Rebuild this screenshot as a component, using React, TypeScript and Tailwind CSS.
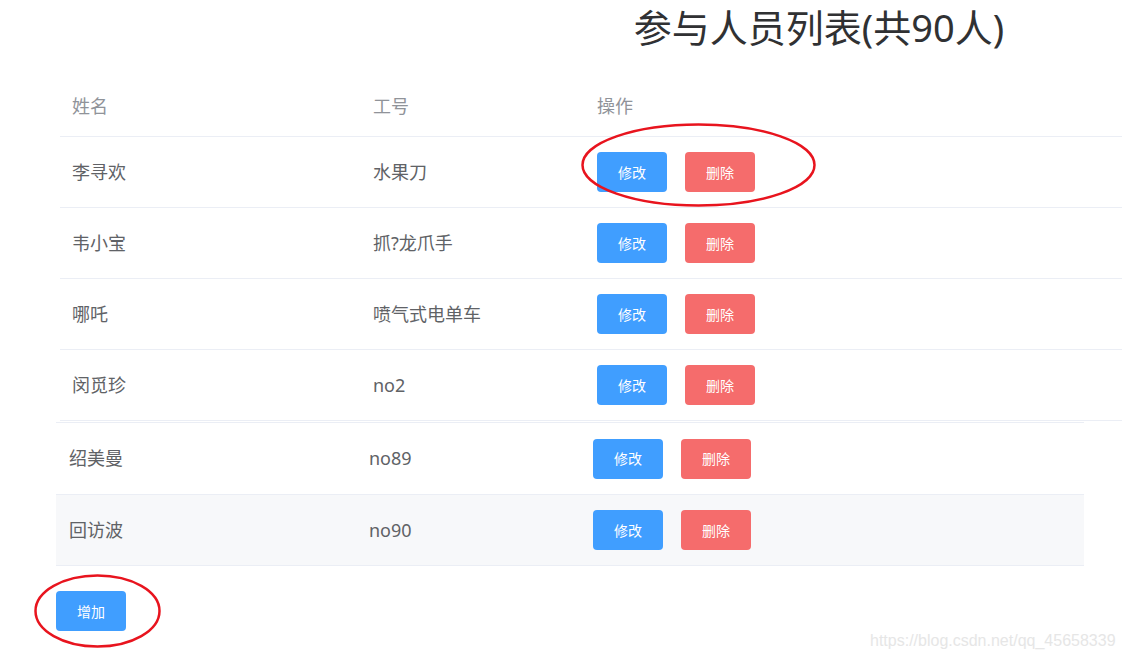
import React from "react";

const rowsTop = [
  ["李寻欢", "水果刀"],
  ["韦小宝", "抓?龙爪手"],
  ["哪吒", "喷气式电单车"],
  ["闵觅珍", "no2"],
];

const font = { fontFamily: '"Noto Sans", "Noto Sans CJK SC", sans-serif' };

function Buttons() {
  return (
    <div className="flex gap-[18px]">
      <button className="w-[70px] h-[40px] rounded-[4px] bg-[#409eff] text-white text-[14px]">修改</button>
      <button className="w-[70px] h-[40px] rounded-[4px] bg-[#f56c6c] text-white text-[14px]">删除</button>
    </div>
  );
}

export default function App() {
  return (
    <div className="relative w-[1122px] h-[660px] overflow-hidden bg-white text-[#606266]" style={font}>
      <div className="h-[76px] ml-[619px] w-[400px] text-center text-[38px] leading-[54px] text-[#303133] whitespace-nowrap">
        参与人员列表(共90人)
      </div>
      <div className="ml-[60px] w-[1062px]">
        <div className="grid grid-cols-[301px_224px_1fr] h-[61px] items-center border-b border-[#ebeef5] text-[18px] text-[#909399]">
          <div className="pl-[12px]">姓名</div>
          <div className="pl-[12px]">工号</div>
          <div className="pl-[12px]">操作</div>
        </div>
        {rowsTop.map((r, i) => (
          <div key={i} className="grid grid-cols-[301px_224px_1fr] h-[71px] items-center border-b border-[#ebeef5] text-[18px]">
            <div className="pl-[12px]">{r[0]}</div>
            <div className="pl-[12px]">{r[1]}</div>
            <div className="pl-[12px]"><Buttons /></div>
          </div>
        ))}
      </div>
      <div className="mt-[1px] ml-[56px] w-[1028px] border-t border-[#ebeef5]">
        <div className="grid grid-cols-[300px_224px_1fr] h-[72px] items-center border-b border-[#ebeef5] text-[18px]">
          <div className="pl-[13px]">绍美曼</div>
          <div className="pl-[13px]">no89</div>
          <div className="pl-[13px]"><Buttons /></div>
        </div>
        <div className="grid grid-cols-[300px_224px_1fr] h-[71px] items-center border-b border-[#ebeef5] bg-[#f7f8fa] text-[18px]">
          <div className="pl-[13px]">回访波</div>
          <div className="pl-[13px]">no90</div>
          <div className="pl-[13px]"><Buttons /></div>
        </div>
      </div>
      <div className="mt-[25px] ml-[56px]">
        <button className="w-[70px] h-[40px] rounded-[4px] bg-[#409eff] text-white text-[14px]">增加</button>
      </div>
      <svg className="absolute left-0 top-0 pointer-events-none" width="1122" height="660">
        <ellipse cx="698.5" cy="165" rx="116" ry="40.5" fill="none" stroke="#e8141e" strokeWidth="2.5" />
        <ellipse cx="97.5" cy="611" rx="62" ry="35.5" fill="none" stroke="#e8141e" strokeWidth="2.5" />
      </svg>
      <div className="absolute left-[870px] top-[630px] text-[16px] leading-[22px] text-[#e6e6e6] whitespace-nowrap" style={{ fontFamily: '"Liberation Sans", sans-serif' }}>
        https://blog.csdn.net/qq_45658339
      </div>
    </div>
  );
}
